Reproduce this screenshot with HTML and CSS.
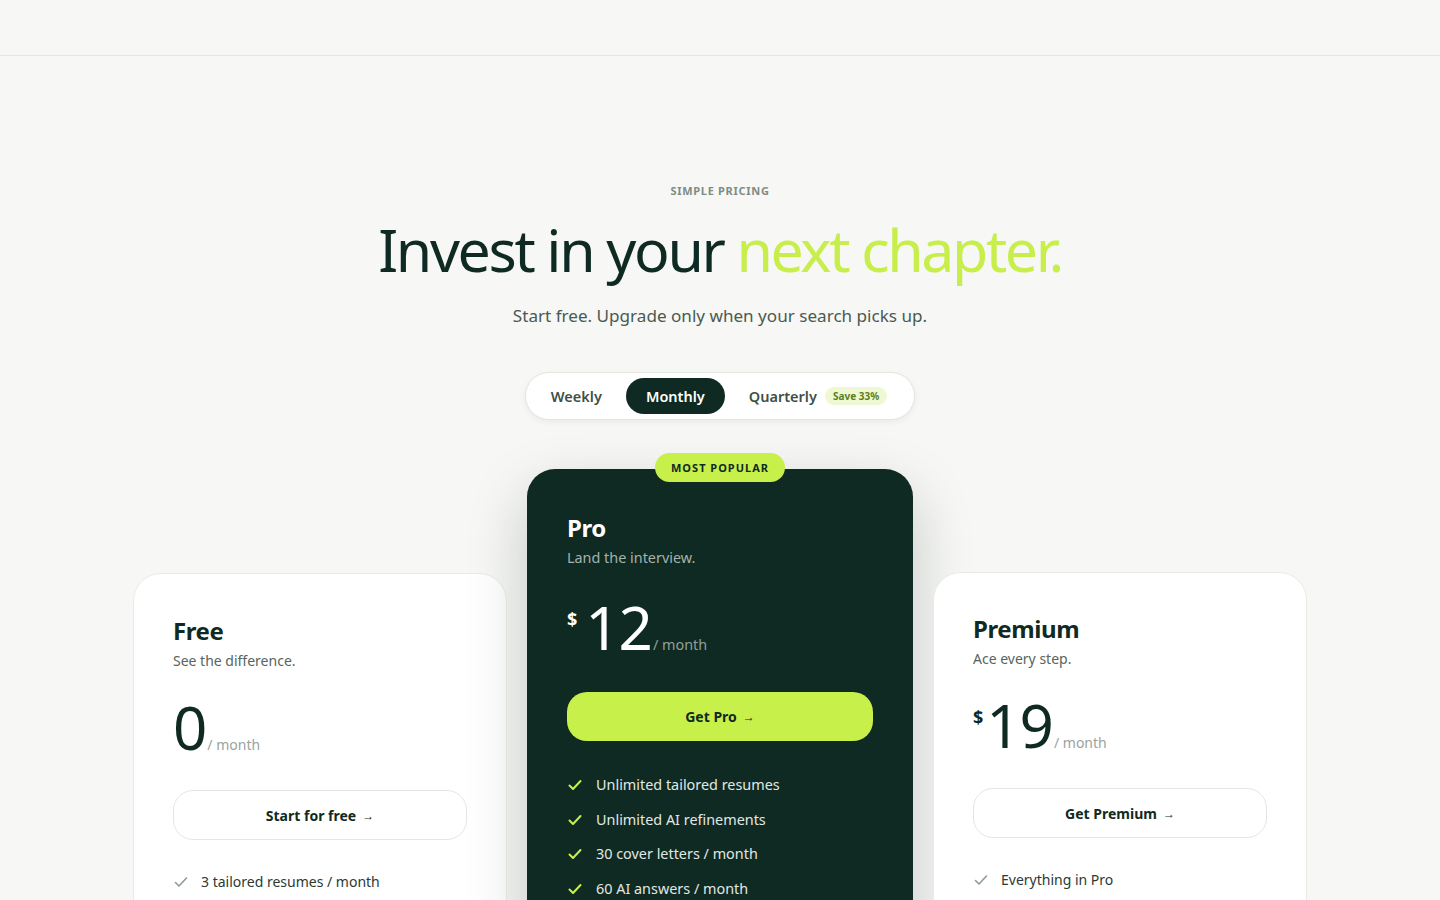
FILE: index.html
```html
<!DOCTYPE html>
<html lang="en">
<head>
<meta charset="utf-8">
<title>Pricing</title>
<link rel="stylesheet" href="styles.css">
</head>
<body>
<header class="topbar"></header>
<main class="pricing">
  <p class="eyebrow">SIMPLE PRICING</p>
  <h1 class="headline">Invest in your <span class="accent">next chapter.</span></h1>
  <p class="lede">Start free. Upgrade only when your search picks up.</p>

  <div class="toggle">
    <button class="tab">Weekly</button>
    <button class="tab tab-active">Monthly</button>
    <button class="tab tab-quarter">Quarterly <span class="save">Save 33%</span></button>
  </div>

  <section class="plans">
    <article class="card card-side">
      <h2 class="plan-name">Free</h2>
      <p class="plan-desc">See the difference.</p>
      <div class="price">
        <span class="amount">0</span><span class="per">/ month</span>
      </div>
      <a class="cta cta-outline">Start for free <span class="arrow">→</span></a>
      <ul class="features">
        <li><svg class="check" viewBox="0 0 16 16"><path d="M2.5 8.5l3.5 3.5 7.5-8"/></svg>3 tailored resumes / month</li>
        <li><svg class="check" viewBox="0 0 16 16"><path d="M2.5 8.5l3.5 3.5 7.5-8"/></svg>5 AI refinements / month</li>
        <li><svg class="check" viewBox="0 0 16 16"><path d="M2.5 8.5l3.5 3.5 7.5-8"/></svg>1 cover letter / month</li>
      </ul>
    </article>

    <article class="card card-pro">
      <span class="badge">MOST POPULAR</span>
      <h2 class="plan-name">Pro</h2>
      <p class="plan-desc">Land the interview.</p>
      <div class="price">
        <span class="cur">$</span><span class="amount">12</span><span class="per">/ month</span>
      </div>
      <a class="cta cta-lime">Get Pro <span class="arrow">→</span></a>
      <ul class="features">
        <li><svg class="check" viewBox="0 0 16 16"><path d="M2.5 8.5l3.5 3.5 7.5-8"/></svg>Unlimited tailored resumes</li>
        <li><svg class="check" viewBox="0 0 16 16"><path d="M2.5 8.5l3.5 3.5 7.5-8"/></svg>Unlimited AI refinements</li>
        <li><svg class="check" viewBox="0 0 16 16"><path d="M2.5 8.5l3.5 3.5 7.5-8"/></svg>30 cover letters / month</li>
        <li><svg class="check" viewBox="0 0 16 16"><path d="M2.5 8.5l3.5 3.5 7.5-8"/></svg>60 AI answers / month</li>
        <li><svg class="check" viewBox="0 0 16 16"><path d="M2.5 8.5l3.5 3.5 7.5-8"/></svg>Priority support</li>
      </ul>
    </article>

    <article class="card card-side card-premium">
      <h2 class="plan-name">Premium</h2>
      <p class="plan-desc">Ace every step.</p>
      <div class="price">
        <span class="cur">$</span><span class="amount">19</span><span class="per">/ month</span>
      </div>
      <a class="cta cta-outline">Get Premium <span class="arrow">→</span></a>
      <ul class="features">
        <li><svg class="check" viewBox="0 0 16 16"><path d="M2.5 8.5l3.5 3.5 7.5-8"/></svg>Everything in Pro</li>
        <li><svg class="check" viewBox="0 0 16 16"><path d="M2.5 8.5l3.5 3.5 7.5-8"/></svg>Unlimited cover letters</li>
        <li><svg class="check" viewBox="0 0 16 16"><path d="M2.5 8.5l3.5 3.5 7.5-8"/></svg>Interview coaching</li>
      </ul>
    </article>
  </section>
</main>
</body>
</html>
```
FILE: styles.css
```css
* { box-sizing: border-box; }
html, body { margin: 0; padding: 0; }
body {
  background: #f7f7f5;
  font-family: "Noto Sans", "Open Sans", sans-serif;
  color: #0f2a22;
}
.topbar {
  height: 56px;
  border-bottom: 1px solid #e4e4e0;
  background: #f7f7f5;
}
.pricing {
  display: flex;
  flex-direction: column;
  align-items: center;
  padding-top: 127px;
  padding-bottom: 80px;
}
.eyebrow {
  margin: 0;
  font-size: 11px;
  line-height: 16px;
  font-weight: 700;
  letter-spacing: 0.7px;
  color: #7d8c84;
}
.headline {
  margin: 17px 0 0;
  font-size: 59px;
  line-height: 66px;
  font-weight: 400;
  letter-spacing: -2.35px;
  color: #0f2a22;
}
.accent { color: #c7ee4b; }
.lede {
  margin: 21px 0 0;
  font-size: 17.1px;
  line-height: 26px;
  color: #4a5a52;
}
.toggle {
  margin-top: 43px;
  display: flex;
  gap: 4px;
  padding: 5px;
  background: #fff;
  border: 1px solid #e6e6e1;
  border-radius: 24px;
  box-shadow: 0 2px 6px rgba(15, 42, 34, 0.06);
}
.tab {
  height: 36px;
  padding: 0 20px;
  border: 0;
  background: transparent;
  border-radius: 18px;
  font-family: inherit;
  font-size: 14.5px;
  font-weight: 600;
  color: #3f4f47;
  display: flex;
  align-items: center;
}
.tab-active { background: #0f2a22; color: #fff; }
.tab-quarter { gap: 8px; padding-right: 22px; }
.save {
  font-size: 10px;
  font-weight: 700;
  line-height: 14px;
  padding: 2px 8px;
  border-radius: 10px;
  background: #eef8d3;
  color: #5d7f1c;
}
.plans {
  margin-top: 49px;
  display: grid;
  grid-template-columns: 374px 386px 374px;
  gap: 20px;
  align-items: start;
}
.card {
  position: relative;
  border-radius: 28px;
  padding: 41px 40px 48px;
}
.card-side {
  margin-top: 104px;
  padding-left: 39px;
  padding-right: 39px;
  background: #fff;
  border: 1px solid #ebebe6;
}
.card-premium {
  margin-top: 103px;
  padding-top: 40px;
}
.card-pro {
  padding-top: 43px;
  background: #0f2a22;
  color: #fff;
  box-shadow: 0 24px 60px rgba(15, 42, 34, 0.22);
}
.badge {
  position: absolute;
  top: -16px;
  left: 50%;
  transform: translateX(-50%);
  height: 29px;
  padding: 0 16px;
  border-radius: 15px;
  background: #c8f04b;
  color: #0f2a22;
  font-size: 11px;
  font-weight: 700;
  letter-spacing: 1px;
  display: flex;
  align-items: center;
  white-space: nowrap;
}
.plan-name {
  margin: 0 0 3px;
  font-size: 24px;
  line-height: 32px;
  font-weight: 700;
  letter-spacing: -0.4px;
}
.plan-desc {
  margin: 0;
  font-size: 14px;
  line-height: 22px;
  color: #56655d;
}
.card-pro .plan-desc { color: #a3b3ab; font-size: 14.4px; }
.price {
  margin-top: 25px;
  display: flex;
  align-items: baseline;
  height: 60px;
}
.card-pro .price { margin-top: 28px; }
.cur {
  align-self: flex-start;
  margin-top: 13px;
  margin-right: 3px;
  font-size: 18px;
  line-height: 18px;
  font-weight: 700;
}
.card-pro .cur { margin-right: 8px; }
.amount {
  font-size: 60px;
  line-height: 60px;
  font-weight: 400;
  letter-spacing: -1px;
}
.per {
  margin-left: 1px;
  font-size: 14px;
  color: #9aa39e;
}
.card-pro .per { color: #8fa199; font-size: 14.4px; }
.cta {
  margin-top: 33px;
  height: 50px;
  border-radius: 20px;
  display: flex;
  align-items: center;
  justify-content: center;
  font-size: 14px;
  font-weight: 700;
  color: #0f2a22;
  cursor: pointer;
}
.cta-outline { border: 1px solid #e6e6e1; background: #fff; }
.cta-lime { background: #c8f04b; margin-top: 35px; height: 49px; }
.arrow { font-size: 12px; margin-left: 6px; font-weight: 600; }
.features {
  list-style: none;
  margin: 32px 0 0;
  padding: 0;
  display: flex;
  flex-direction: column;
  gap: 14.5px;
}
.card-pro .features { margin-top: 34px; }
.features li {
  display: flex;
  align-items: center;
  gap: 12px;
  font-size: 14px;
  line-height: 20px;
  color: #2b3a33;
}
.card-pro .features li { color: #e1e8e4; font-size: 14.4px; gap: 13px; }
.check {
  width: 16px;
  height: 16px;
  fill: none;
  stroke: #8e9b94;
  stroke-width: 1.6;
  stroke-linecap: round;
  stroke-linejoin: round;
}
.card-pro .check { stroke: #c8f04b; stroke-width: 2; }
```
